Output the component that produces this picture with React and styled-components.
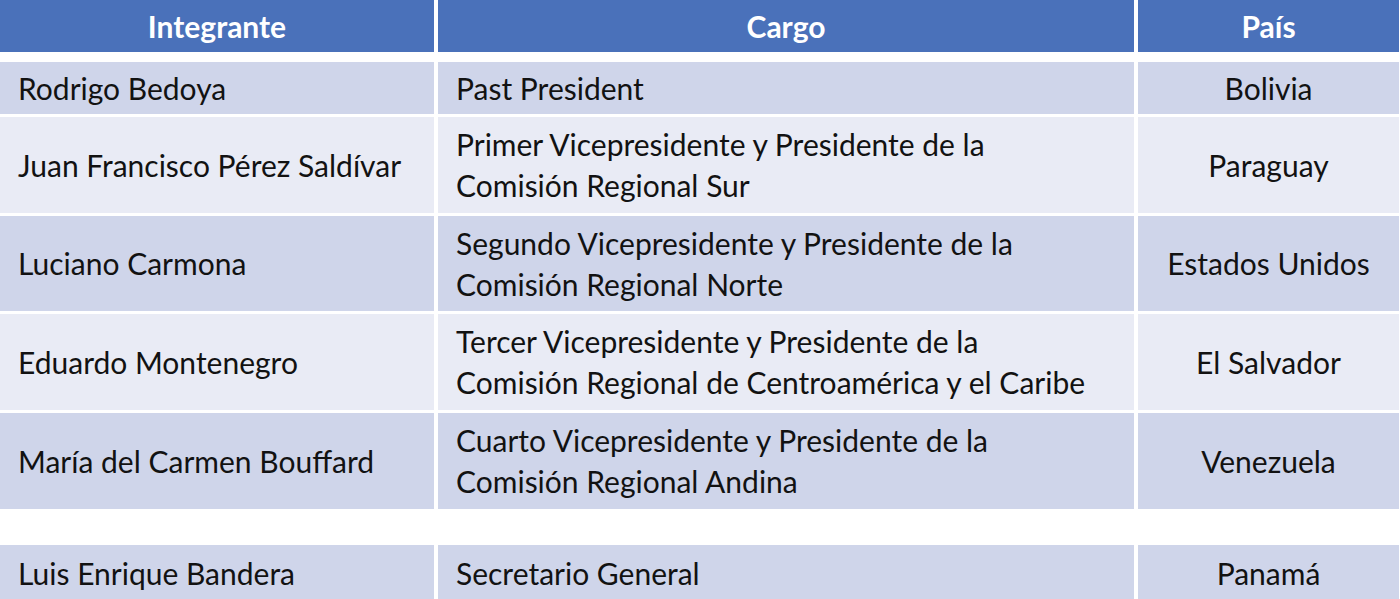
import React from "react";
import styled, { createGlobalStyle } from "styled-components";

const Global = createGlobalStyle`
  html, body { margin: 0; padding: 0; background: #ffffff; }
  body { font-family: Lato, "Liberation Sans", sans-serif; overflow: hidden; }
`;

const Page = styled.div`
  width: 1400px;
  height: 599px;
  overflow: hidden;
  display: flex;
  flex-direction: column;
`;

const Section = styled.div`
  display: flex;
  flex-direction: column;
  gap: 3px;
  margin-bottom: ${(p) => p.$after || 0}px;
`;

const Row = styled.div`
  display: grid;
  grid-template-columns: 434px 696px 261px;
  column-gap: 4px;
  height: ${(p) => p.$h}px;
  flex: none;
  margin-bottom: ${(p) => p.$mb || 0}px;
`;

const HeadCell = styled.div`
  background: #4a71ba;
  color: #ffffff;
  font-weight: 700;
  font-size: 30px;
  display: flex;
  align-items: center;
  justify-content: center;
`;

const Cell = styled.div`
  background: ${(p) => (p.$shade === "dark" ? "#cfd5ea" : "#e9ebf5")};
  color: #121212;
  font-size: 30px;
  line-height: 41px;
  display: flex;
  align-items: center;
  justify-content: ${(p) => (p.$center ? "center" : "flex-start")};
  padding: 0 ${(p) => (p.$center ? 0 : 18)}px;
  text-align: ${(p) => (p.$center ? "center" : "left")};
  white-space: pre-line;
`;

const group1 = [
  ["Rodrigo Bedoya", "Past President", "Bolivia", 52],
  ["Juan Francisco Pérez Saldívar", "Primer Vicepresidente y Presidente de la\nComisión Regional Sur", "Paraguay", 96],
  ["Luciano Carmona", "Segundo Vicepresidente y Presidente de la\nComisión Regional Norte", "Estados Unidos", 95],
  ["Eduardo Montenegro", "Tercer Vicepresidente y Presidente de la\nComisión Regional de Centroamérica y el Caribe", "El Salvador", 96],
  ["María del Carmen Bouffard", "Cuarto Vicepresidente y Presidente de la\nComisión Regional Andina", "Venezuela", 96],
];

const group2 = [["Luis Enrique Bandera", "Secretario General", "Panamá", 56]];

export default function App() {
  return (
    <Page>
      <Global />
      <Row $h={52} $mb={10}>
        <HeadCell>Integrante</HeadCell>
        <HeadCell>Cargo</HeadCell>
        <HeadCell>País</HeadCell>
      </Row>
      <Section $after={36}>
        {group1.map(([a, b, c, h], i) => {
          const shade = i % 2 === 0 ? "dark" : "light";
          return (
            <Row key={a} $h={h}>
              <Cell $shade={shade}>{a}</Cell>
              <Cell $shade={shade}>{b}</Cell>
              <Cell $shade={shade} $center>{c}</Cell>
            </Row>
          );
        })}
      </Section>
      <Section>
        {group2.map(([a, b, c, h]) => (
          <Row key={a} $h={h}>
            <Cell $shade="dark">{a}</Cell>
            <Cell $shade="dark">{b}</Cell>
            <Cell $shade="dark" $center>{c}</Cell>
          </Row>
        ))}
      </Section>
    </Page>
  );
}
